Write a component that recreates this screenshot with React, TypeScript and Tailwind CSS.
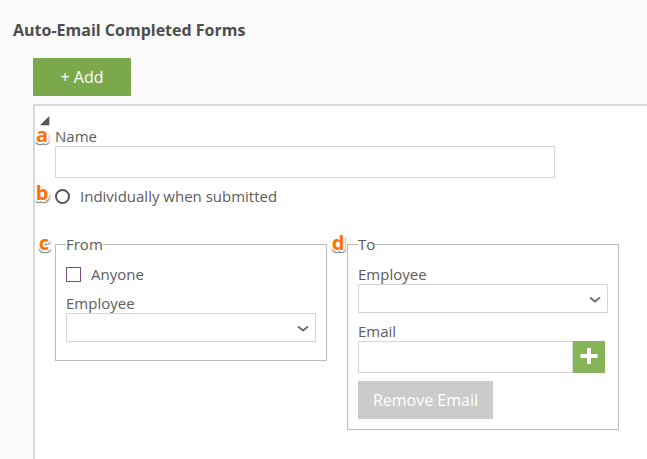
import React, { useState } from 'react';

const fieldBorder = 'border border-[#d6d6d6] bg-white outline-none focus:border-[#7aa84a]';

const Marker: React.FC<{ letter: string; className: string }> = ({ letter, className }) => (
  <span
    aria-hidden="true"
    className={`absolute w-4 text-center font-['Noto_Sans','Open_Sans',sans-serif] text-xl leading-5 font-bold text-[#ff7300] [text-shadow:-1px_-1px_0_#fff,1px_-1px_0_#fff,-1px_1px_0_#fff,1px_1px_0_#fff,2px_0_0_#fff,-2px_0_0_#fff,0_2px_0_#fff,1px_3px_1px_#888,-1px_3px_1px_#888,3px_2px_1px_#bbb] ${className}`}
  >
    {letter}
  </span>
);

const EmployeeSelect: React.FC<{ id: string }> = ({ id }) => (
  <div>
    <label htmlFor={id} className="block">Employee</label>
    <div className="relative">
      <select id={id} className={`block h-[29px] w-full appearance-none px-2 ${fieldBorder}`}>
        <option value=""></option>
      </select>
      <svg
        viewBox="0 0 12 8"
        className="pointer-events-none absolute right-[7px] top-3 h-2 w-3 fill-none stroke-[#6f6f6f] stroke-2"
      >
        <path d="M1 1.5L6 5.5L11 1.5" />
      </svg>
    </div>
  </div>
);

const Group: React.FC<{ title: string; children: React.ReactNode }> = ({ title, children }) => (
  <fieldset className="border border-[#bdbdbd] px-[10px] pt-[10px]">
    <legend>{title}</legend>
    {children}
  </fieldset>
);

const App: React.FC = () => {
  const [isOpen, setIsOpen] = useState(true);

  return (
    <main className="flex min-h-screen flex-col bg-[#fafafa] pt-[18px] font-['Open_Sans','Noto_Sans',sans-serif] text-[15px] leading-5 text-[#5c5c5c]">
      <h1 className="pl-[13px] text-base leading-6 font-bold text-[#4d4d4d]">Auto-Email Completed Forms</h1>

      <div className="mt-4 pl-[33px]">
        <button type="button" className="block h-[38px] w-[98px] rounded-[1px] bg-[#7aa84a] text-base text-white">
          + Add
        </button>
      </div>

      <section className="mt-2 ml-[33px] grow border-t-2 border-l-2 border-[#dadada] bg-white pt-[10px] pb-7">
        <button
          type="button"
          aria-label="Toggle details"
          aria-expanded={isOpen}
          onClick={() => setIsOpen(!isOpen)}
          className="ml-[5px] block h-[10px] w-[10px]"
        >
          <svg viewBox="0 0 10 10" className="h-full w-full fill-[#555]">
            <path d="M9.3 0V9.3H0Z" />
          </svg>
        </button>

        {isOpen && (
          <form className="pl-5">
            <div className="relative max-w-[500px]">
              <Marker letter="a" className="-left-[21px] -top-px" />
              <label htmlFor="name" className="block">Name</label>
              <input id="name" type="text" className={`block h-8 w-full px-2 ${fieldBorder}`} />
            </div>

            <div className="relative mt-2">
              <Marker letter="b" className="-left-[21px] -top-[3px]" />
              <label className="flex items-center gap-[10px]">
                <input
                  type="radio"
                  name="delivery"
                  className="h-[15px] w-[15px] appearance-none rounded-full border-2 border-[#555] bg-white checked:bg-[#555]"
                />
                Individually when submitted
              </label>
            </div>

            <div className="mt-7 flex flex-wrap items-start gap-5">
              <div className="relative w-[272px]">
                <Marker letter="c" className="-left-[19px] -top-px" />
                <Group title="From">
                  <div className="flex flex-col gap-[9px] pb-[18px]">
                    <label className="flex items-center gap-[10px]">
                      <input
                        type="checkbox"
                        className="h-[15px] w-[15px] appearance-none border border-[#7d4a80] bg-white checked:bg-[#7d4a80]"
                      />
                      Anyone
                    </label>
                    <EmployeeSelect id="from-employee" />
                  </div>
                </Group>
              </div>

              <div className="relative w-[272px]">
                <Marker letter="d" className="-left-[17px] -top-px" />
                <Group title="To">
                  <div className="flex flex-col gap-2 pb-[10px]">
                    <EmployeeSelect id="to-employee" />
                    <div>
                      <label htmlFor="email" className="block">Email</label>
                      <div className="flex pr-[3px]">
                        <input id="email" type="email" className={`h-8 min-w-0 grow px-2 ${fieldBorder}`} />
                        <button
                          type="button"
                          aria-label="Add email"
                          className="flex h-8 w-8 shrink-0 items-center justify-center bg-[#86b557]"
                        >
                          <svg viewBox="0 0 18 18" className="h-[18px] w-[18px] fill-white">
                            <path d="M7 0h4v6h6.500v4H11v6H7v-6H.5V6H7Z" />
                          </svg>
                        </button>
                      </div>
                    </div>
                    <button type="button" className="h-[38px] w-[135px] bg-[#cbcbcb] text-base text-white">
                      Remove Email
                    </button>
                  </div>
                </Group>
              </div>
            </div>
          </form>
        )}
      </section>
    </main>
  );
};

export default App;
